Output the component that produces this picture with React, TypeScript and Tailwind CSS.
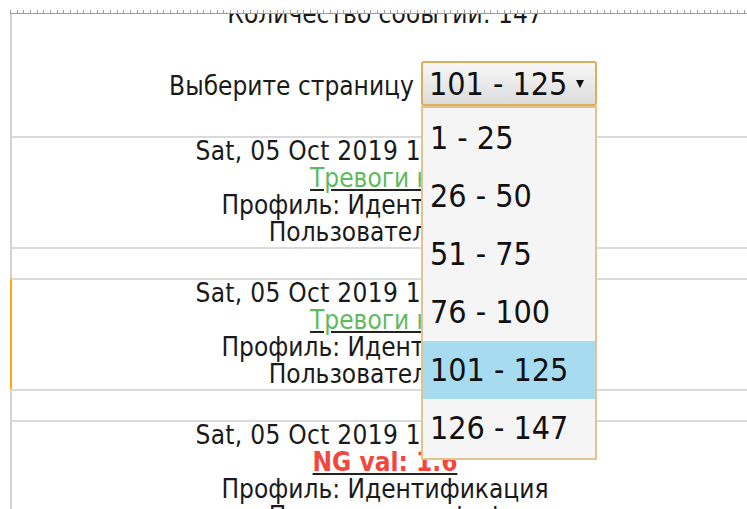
import React from 'react';

type EventRow = {
  id: number;
  date: string;
  alarm: { text: string; kind: 'ok' | 'ng' };
  profile: string;
  user: string;
  active?: boolean;
};

const pages = ['1 - 25', '26 - 50', '51 - 75', '76 - 100', '101 - 125', '126 - 147'];
const currentPage = '101 - 125';

const events: EventRow[] = [
  {
    id: 1,
    date: 'Sat, 05 Oct 2019 14:32:10 GMT',
    alarm: { text: 'Тревоги нет', kind: 'ok' },
    profile: 'Профиль: Идентификация',
    user: 'Пользователь: test',
  },
  {
    id: 2,
    date: 'Sat, 05 Oct 2019 14:31:52 GMT',
    alarm: { text: 'Тревоги нет', kind: 'ok' },
    profile: 'Профиль: Идентификация',
    user: 'Пользователь: test',
    active: true,
  },
  {
    id: 3,
    date: 'Sat, 05 Oct 2019 14:31:07 GMT',
    alarm: { text: 'NG val: 1.6', kind: 'ng' },
    profile: 'Профиль: Идентификация',
    user: 'Пользователь: test',
  },
];

function PageSelect() {
  return (
    <div className="relative">
      <div className="flex h-[45px] w-[176px] items-center rounded-[3px] border-2 border-[#dfae58] bg-gradient-to-b from-[#f8f8f8] to-[#dcdcdc] pl-[6px] pr-[11px] text-[32px] leading-[40px] text-[#111]">
        <span>{currentPage}</span>
        <svg className="ml-auto" width="8" height="8" viewBox="0 0 8 8">
          <path d="M0 0h8L4 8z" fill="#111" />
        </svg>
      </div>

      {/* открытый список страниц */}
      <ul className="absolute left-0 top-full z-10 w-[176px] border-2 border-[#e0c38e] bg-[#f5f5f5] py-[1px] text-left">
        {pages.map((page) => (
          <li
            key={page}
            className={
              page === currentPage
                ? 'flex h-[58px] items-center bg-[#a7dbf0] pl-[7px] text-[32px] text-[#111]'
                : 'flex h-[58px] items-center pl-[7px] text-[32px] text-[#111]'
            }
          >
            {page}
          </li>
        ))}
      </ul>
    </div>
  );
}

function EventItem({ event }: { event: EventRow }) {
  return (
    <>
      <div
        className={
          event.active
            ? 'h-[111px] border-l-2 border-t-2 border-l-[#ffa800] border-t-[#dadada] text-center'
            : 'h-[111px] border-l-2 border-t-2 border-l-[#d2d2d2] border-t-[#dadada] text-center'
        }
      >
        <div className="tracking-[0.3px]">{event.date}</div>
        <div>
          {event.alarm.kind === 'ok' ? (
            <a className="text-[#5fba5f] underline decoration-[#222]">{event.alarm.text}</a>
          ) : (
            <a className="font-bold text-[#f4473c] underline decoration-[#222]">{event.alarm.text}</a>
          )}
        </div>
        <div>{event.profile}</div>
        <div>{event.user}</div>
      </div>
      <div className="h-[31px] border-l-2 border-t-2 border-l-[#d2d2d2] border-t-[#dadada]" />
    </>
  );
}

export default function App() {
  return (
    <div
      className="h-[509px] w-[747px] overflow-hidden bg-white text-[26px] leading-[27px] text-[#1a1a1a]"
      style={{ fontFamily: '"DejaVu Sans Condensed", "DejaVu Sans", sans-serif' }}
    >
      <div className="h-[10px]" />
      <div className="ml-[10px] h-[4px] border-b border-[#9c9c9c] bg-[repeating-linear-gradient(90deg,#9c9c9c_0px,#9c9c9c_1px,transparent_1px,transparent_6.67px)]" />

      <div className="ml-[10px] w-[748px]">
        <div className="h-[122px] border-l-2 border-[#d2d2d2] text-center">
          {/* верх блока прокручен за край рамки */}
          <div className="h-[14px] overflow-hidden">
            <p className="mt-[-13px]">Количество событий: 147</p>
          </div>
          <div className="mt-[33px] flex items-baseline justify-center gap-[7px] pr-[4px]">
            <span>Выберите страницу</span>
            <PageSelect />
          </div>
        </div>

        {events.map((event) => (
          <EventItem key={event.id} event={event} />
        ))}
      </div>
    </div>
  );
}
